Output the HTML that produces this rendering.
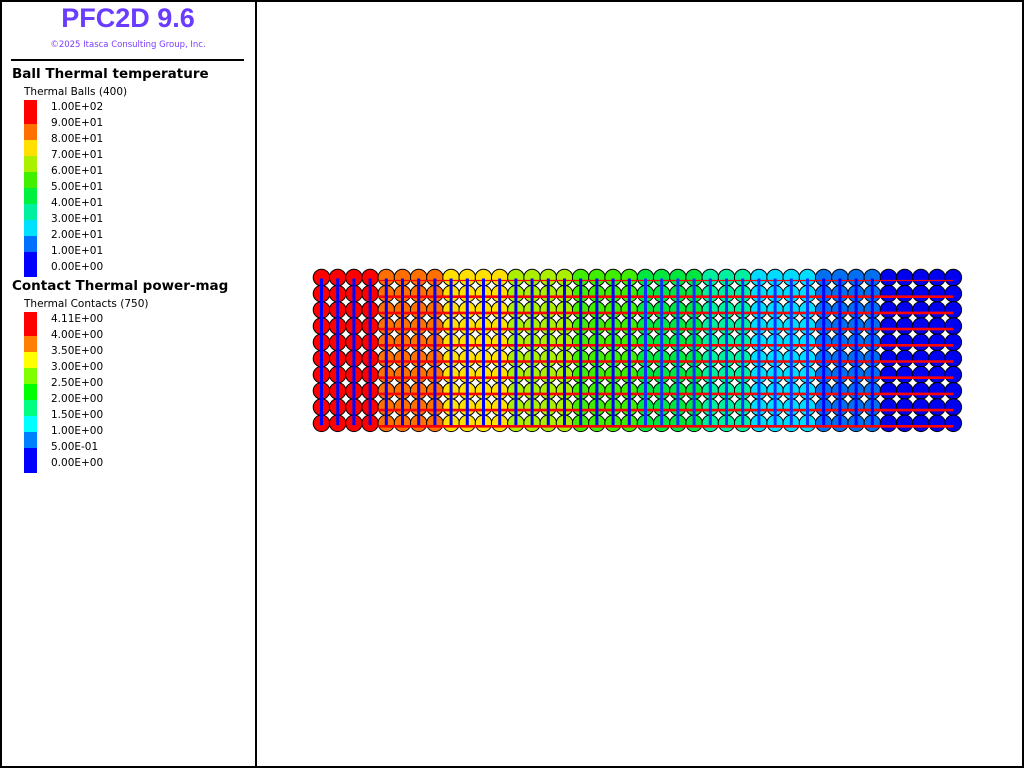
<!DOCTYPE html>
<html><head><meta charset="utf-8">
<style>
html,body{margin:0;padding:0;background:#fff;}
body{width:1024px;height:768px;position:relative;overflow:hidden;font-family:"DejaVu Sans","Liberation Sans",sans-serif;}
#frame{position:absolute;left:0;top:0;width:1020px;height:764px;border:2px solid #000;}
#div{position:absolute;left:255px;top:0;width:2px;height:768px;background:#000;}
.t{position:absolute;white-space:nowrap;color:#000;}
.sw{position:absolute;left:24px;width:13px;}
.lab{position:absolute;left:51px;font-size:10.5px;white-space:nowrap;}
</style></head><body>
<div id="frame"></div><div id="div"></div>
<div class="t" style="left:0;width:256px;text-align:center;top:3px;font-size:27px;font-weight:bold;color:#6a3cff;font-family:'Liberation Sans',sans-serif;">PFC2D 9.6</div>
<div class="t" style="left:0;width:256px;text-align:center;top:40px;font-size:8.5px;color:#7a3cff;">©2025 Itasca Consulting Group, Inc.</div>
<div style="position:absolute;left:11px;top:59px;width:233px;height:2px;background:#000"></div>
<div class="t" style="left:12px;top:66px;font-size:13.5px;font-weight:bold;">Ball Thermal temperature</div>
<div class="t" style="left:24px;top:86px;font-size:10.5px;">Thermal Balls (400)</div>
<div class="t" style="left:12px;top:278px;font-size:13.5px;font-weight:bold;">Contact Thermal power-mag</div>
<div class="t" style="left:24px;top:298px;font-size:10.5px;">Thermal Contacts (750)</div>
<div id="leg"></div>
<svg id="s" width="1024" height="768" style="position:absolute;left:0;top:0"></svg>
<script>
var leg=document.getElementById('leg'),h='';
function legend(top,cols,labels){
  var y=top;
  for(var i=0;i<cols.length;i++){
    var hh=(i==0)?24:(i==cols.length-1?25:16);
    h+='<div class="sw" style="top:'+y+'px;height:'+hh+'px;background:'+cols[i]+'"></div>';
    y+=hh;
  }
  for(var j=0;j<labels.length;j++)h+='<div class="lab" style="top:'+(top+1+16*j)+'px">'+labels[j]+'</div>';
}
legend(100,['#ff0000','#ff7000','#ffe000','#aaf000','#40f000','#00f040','#00f0a0','#00e0ff','#0070ff','#0000ff'],
['1.00E+02','9.00E+01','8.00E+01','7.00E+01','6.00E+01','5.00E+01','4.00E+01','3.00E+01','2.00E+01','1.00E+01','0.00E+00']);
legend(312,['#ff0000','#ff8000','#ffff00','#80ff00','#00ff00','#00ff80','#00ffff','#0080ff','#0000ff'],
['4.11E+00','4.00E+00','3.50E+00','3.00E+00','2.50E+00','2.00E+00','1.50E+00','1.00E+00','5.00E-01','0.00E+00']);
leg.innerHTML=h;
var bins=[4,4,4,4,4,4,3,4,4,5];
var bc=['#ff0000','#ff7000','#ffe000','#aaf000','#40ee00','#00e840','#00f0a0','#00dcff','#0070f0','#0000f0'];
var colc=[];for(var b=0;b<bins.length;b++)for(var k=0;k<bins[b];k++)colc.push(bc[b]);
var s='';
var x0=321.5,y0=277.5,dx=16.2,dy=16.2,r=8.3;
for(var c=0;c<40;c++)for(var rw=0;rw<10;rw++){
  s+='<circle cx="'+(x0+c*dx).toFixed(1)+'" cy="'+(y0+rw*dy).toFixed(1)+'" r="'+r+'" fill="'+colc[c]+'" stroke="#000" stroke-width="1"/>';
}
for(var rw=0;rw<10;rw++){
  var y=(y0+rw*dy+3).toFixed(1);
  s+='<line x1="'+(x0+4*dx-8)+'" x2="'+(x0+39*dx)+'" y1="'+y+'" y2="'+y+'" stroke="#ff0000" stroke-width="'+(rw==0?1.2:2.6)+'"/>';
}
for(var c=0;c<35;c++){
  var x=(x0+c*dx).toFixed(1);
  var col=(c>=20&&c<31)?'#1030ff':'#0000ff';
  s+='<line x1="'+x+'" x2="'+x+'" y1="'+(y0+1)+'" y2="'+(y0+9*dy+2)+'" stroke="'+col+'" stroke-width="3"/>';
}
document.getElementById('s').innerHTML=s;
</script>
</body></html>
